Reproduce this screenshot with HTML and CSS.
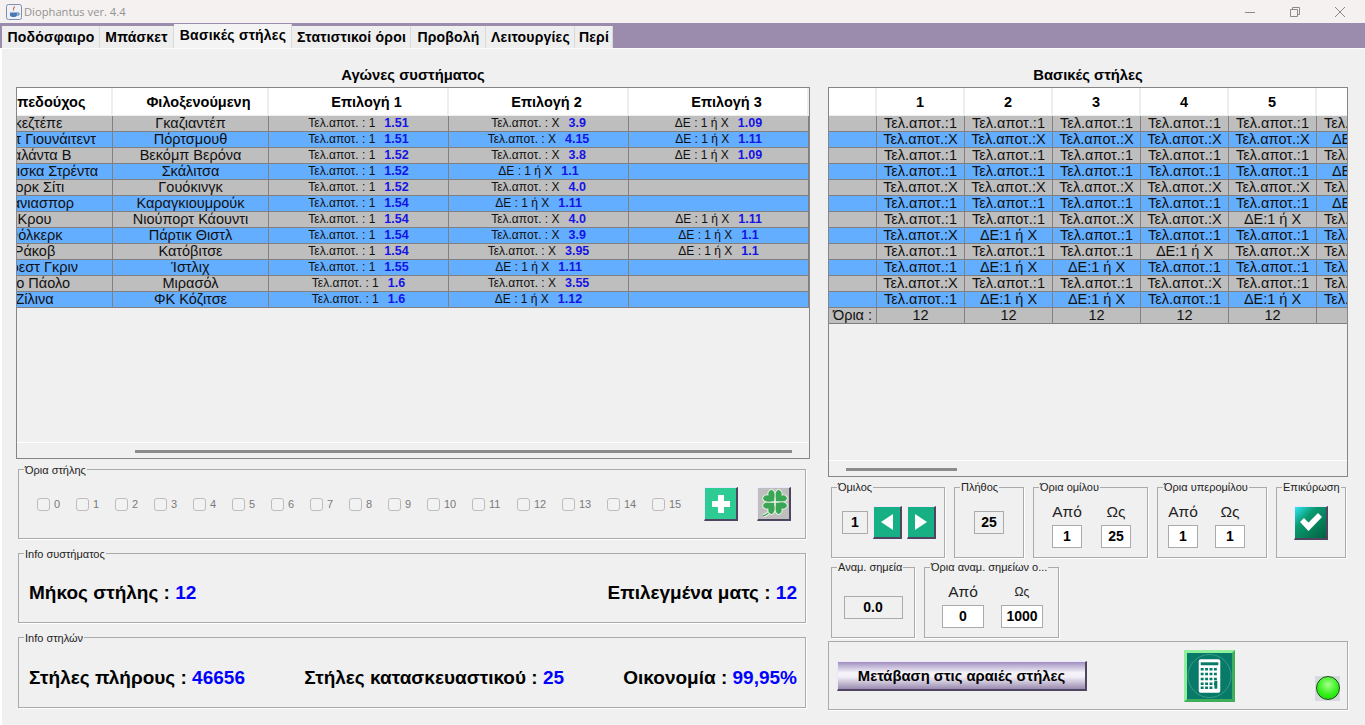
FILE: index.html
```html
<!DOCTYPE html>
<html lang="el">
  <head>
    <meta charset="UTF-8">
    <title>Diophantus ver. 4.4</title>
    <link rel="stylesheet" href="styles.css">
  </head>
  <body>
    <div class="titlebar">
      <svg class="app-icon" width="16" height="16" viewBox="0 0 16 16">
        <rect x="0.5" y="0.5" width="15" height="15" rx="2" fill="#eef1f6" stroke="#7d8fb0"/>
        <path d="M8.5 2 C10 4 6.5 5 8 7.5 C6 6 7 4 8.5 2Z" fill="#d9592b"/>
        <path d="M4 8.5 H11 V11 C11 12.5 9.5 13 7.5 13 C5.5 13 4 12.5 4 11Z" fill="#4a78b5"/>
        <path d="M11 9 H13 V11 H11" fill="none" stroke="#4a78b5"/>
      </svg>
      <span class="app-name">Diophantus ver. 4.4</span>
      <div class="win-controls">
        <svg width="12" height="12" viewBox="0 0 12 12"><path d="M1 6.5 H11" stroke="#8a8a8a"/></svg>
        <svg width="12" height="12" viewBox="0 0 12 12"><path d="M1.5 3.5 H8.5 V10.5 H1.5Z M3.5 3.5 V1.5 H10.5 V8.5 H8.5" fill="none" stroke="#8a8a8a"/></svg>
        <svg width="12" height="12" viewBox="0 0 12 12"><path d="M1 1 L11 11 M11 1 L1 11" stroke="#8a8a8a"/></svg>
      </div>
    </div>

    <div class="tabs">
      <div class="tab tab-1">Ποδόσφαιρο</div>
      <div class="tab tab-2">Μπάσκετ</div>
      <div class="tab tab-3 active">Βασικές στήλες</div>
      <div class="tab tab-4">Στατιστικοί όροι</div>
      <div class="tab tab-5">Προβολή</div>
      <div class="tab tab-6">Λειτουργίες</div>
      <div class="tab tab-7">Περί</div>
    </div>

    <div class="pane">
      <div class="col-left">
        <h2 class="heading">Αγώνες συστήματος</h2>
        <div class="table-box games-box">
          <div class="table-clip">
            <table class="games">
              <thead>
                <tr><th>Γηπεδούχος</th><th>Φιλοξενούμενη</th><th>Επιλογή 1</th><th>Επιλογή 2</th><th>Επιλογή 3</th></tr>
              </thead>
              <tbody>
                <tr><td>Γκεζτέπε</td><td>Γκαζιαντέπ</td><td class="opt">Τελ.αποτ. : 1<b>1.51</b></td><td class="opt">Τελ.αποτ. : Χ<b>3.9</b></td><td class="opt">ΔΕ : 1 ή Χ<b>1.09</b></td></tr>
                <tr><td>Σέφιλντ Γιουνάιτεντ</td><td>Πόρτσμουθ</td><td class="opt">Τελ.αποτ. : 1<b>1.51</b></td><td class="opt">Τελ.αποτ. : Χ<b>4.15</b></td><td class="opt">ΔΕ : 1 ή Χ<b>1.11</b></td></tr>
                <tr><td>Αταλάντα Β</td><td>Βεκόμπ Βερόνα</td><td class="opt">Τελ.αποτ. : 1<b>1.52</b></td><td class="opt">Τελ.αποτ. : Χ<b>3.8</b></td><td class="opt">ΔΕ : 1 ή Χ<b>1.09</b></td></tr>
                <tr><td>Μπράνισκα Στρέντα</td><td>Σκάλιτσα</td><td class="opt">Τελ.αποτ. : 1<b>1.52</b></td><td class="opt">ΔΕ : 1 ή Χ<b>1.1</b></td><td></td></tr>
                <tr><td>Γιορκ Σίτι</td><td>Γουόκινγκ</td><td class="opt">Τελ.αποτ. : 1<b>1.52</b></td><td class="opt">Τελ.αποτ. : Χ<b>4.0</b></td><td></td></tr>
                <tr><td>Αλάνιασπορ</td><td>Καραγκιουμρούκ</td><td class="opt">Τελ.αποτ. : 1<b>1.54</b></td><td class="opt">ΔΕ : 1 ή Χ<b>1.11</b></td><td></td></tr>
                <tr><td>Κρου</td><td>Νιούπορτ Κάουντι</td><td class="opt">Τελ.αποτ. : 1<b>1.54</b></td><td class="opt">Τελ.αποτ. : Χ<b>4.0</b></td><td class="opt">ΔΕ : 1 ή Χ<b>1.11</b></td></tr>
                <tr><td>Φόλκερκ</td><td>Πάρτικ Θιστλ</td><td class="opt">Τελ.αποτ. : 1<b>1.54</b></td><td class="opt">Τελ.αποτ. : Χ<b>3.9</b></td><td class="opt">ΔΕ : 1 ή Χ<b>1.1</b></td></tr>
                <tr><td>Ράκοβ</td><td>Κατόβιτσε</td><td class="opt">Τελ.αποτ. : 1<b>1.54</b></td><td class="opt">Τελ.αποτ. : Χ<b>3.95</b></td><td class="opt">ΔΕ : 1 ή Χ<b>1.1</b></td></tr>
                <tr><td>Φόρεστ Γκριν</td><td>Ίστλιχ</td><td class="opt">Τελ.αποτ. : 1<b>1.55</b></td><td class="opt">ΔΕ : 1 ή Χ<b>1.11</b></td><td></td></tr>
                <tr><td>Σάο Πάολο</td><td>Μιρασόλ</td><td class="opt">Τελ.αποτ. : 1<b>1.6</b></td><td class="opt">Τελ.αποτ. : Χ<b>3.55</b></td><td></td></tr>
                <tr><td>Ζίλινα</td><td>ΦΚ Κόζιτσε</td><td class="opt">Τελ.αποτ. : 1<b>1.6</b></td><td class="opt">ΔΕ : 1 ή Χ<b>1.12</b></td><td></td></tr>
              </tbody>
            </table>
          </div>
          <div class="hscroll"><div class="thumb games-thumb"></div></div>
        </div>

        <div class="group limits">
          <span class="group-title">Όρια στήλης</span>
          <div class="checks">
            <label class="check"><i></i>0</label>
            <label class="check"><i></i>1</label>
            <label class="check"><i></i>2</label>
            <label class="check"><i></i>3</label>
            <label class="check"><i></i>4</label>
            <label class="check"><i></i>5</label>
            <label class="check"><i></i>6</label>
            <label class="check"><i></i>7</label>
            <label class="check"><i></i>8</label>
            <label class="check"><i></i>9</label>
            <label class="check wide"><i></i>10</label>
            <label class="check wide"><i></i>11</label>
            <label class="check wide"><i></i>12</label>
            <label class="check wide"><i></i>13</label>
            <label class="check wide"><i></i>14</label>
            <label class="check wide"><i></i>15</label>
          </div>
          <button class="bevel plus-btn">
            <svg width="20" height="20" viewBox="0 0 20 20"><path d="M7 1 H13 V7 H19 V13 H13 V19 H7 V13 H1 V7 H7Z" fill="#fff"/></svg>
          </button>
          <button class="bevel clover-btn">
            <svg width="30" height="30" viewBox="0 0 30 30">
              <defs>
                <path id="leaf" d="M0 0 C-1 -3 -7 -4 -7 -9 C-7 -13 -2 -13 0 -10 C2 -13 7 -13 7 -9 C7 -4 1 -3 0 0Z"/>
              </defs>
              <path d="M15 15 C13 21 10 25 4 27" fill="none" stroke="#fff" stroke-width="3"/>
              <path d="M15 15 C13 21 10 25 4 27" fill="none" stroke="#3a9f52" stroke-width="1.5"/>
              <g fill="#3aa655" stroke="#e4efe2" stroke-width="1">
                <use href="#leaf" transform="translate(16 13) rotate(45)"/>
                <use href="#leaf" transform="translate(16 13) rotate(135)"/>
                <use href="#leaf" transform="translate(16 13) rotate(225)"/>
                <use href="#leaf" transform="translate(16 13) rotate(315)"/>
              </g>
            </svg>
          </button>
        </div>

        <div class="group info">
          <span class="group-title">Info συστήματος</span>
          <div class="stat">Μήκος στήλης : <em>12</em></div>
          <div class="stat">Επιλεγμένα ματς : <em>12</em></div>
        </div>

        <div class="group info condensed">
          <span class="group-title">Info στηλών</span>
          <div class="stat">Στήλες πλήρους : <em>46656</em></div>
          <div class="stat">Στήλες κατασκευαστικού : <em>25</em></div>
          <div class="stat">Οικονομία : <em>99,95%</em></div>
        </div>
      </div>

      <div class="col-right">
        <h2 class="heading">Βασικές στήλες</h2>
        <div class="table-box columns-box">
          <div class="table-clip">
            <table class="columns">
              <thead>
                <tr><th></th><th>1</th><th>2</th><th>3</th><th>4</th><th>5</th><th></th></tr>
              </thead>
              <tbody>
                <tr><td></td><td>Τελ.αποτ.:1</td><td>Τελ.αποτ.:1</td><td>Τελ.αποτ.:1</td><td>Τελ.αποτ.:1</td><td>Τελ.αποτ.:1</td><td>Τελ.αποτ.:1</td></tr>
                <tr><td></td><td>Τελ.αποτ.:Χ</td><td>Τελ.αποτ.:Χ</td><td>Τελ.αποτ.:Χ</td><td>Τελ.αποτ.:Χ</td><td>Τελ.αποτ.:Χ</td><td>ΔΕ:1 ή Χ</td></tr>
                <tr><td></td><td>Τελ.αποτ.:1</td><td>Τελ.αποτ.:1</td><td>Τελ.αποτ.:1</td><td>Τελ.αποτ.:1</td><td>Τελ.αποτ.:1</td><td>Τελ.αποτ.:1</td></tr>
                <tr><td></td><td>Τελ.αποτ.:1</td><td>Τελ.αποτ.:1</td><td>Τελ.αποτ.:1</td><td>Τελ.αποτ.:1</td><td>Τελ.αποτ.:1</td><td>ΔΕ:1 ή Χ</td></tr>
                <tr><td></td><td>Τελ.αποτ.:Χ</td><td>Τελ.αποτ.:Χ</td><td>Τελ.αποτ.:Χ</td><td>Τελ.αποτ.:Χ</td><td>Τελ.αποτ.:Χ</td><td>Τελ.αποτ.:1</td></tr>
                <tr><td></td><td>Τελ.αποτ.:1</td><td>Τελ.αποτ.:1</td><td>Τελ.αποτ.:1</td><td>Τελ.αποτ.:1</td><td>Τελ.αποτ.:1</td><td>ΔΕ:1 ή Χ</td></tr>
                <tr><td></td><td>Τελ.αποτ.:1</td><td>Τελ.αποτ.:1</td><td>Τελ.αποτ.:Χ</td><td>Τελ.αποτ.:Χ</td><td>ΔΕ:1 ή Χ</td><td>Τελ.αποτ.:1</td></tr>
                <tr><td></td><td>Τελ.αποτ.:Χ</td><td>ΔΕ:1 ή Χ</td><td>Τελ.αποτ.:1</td><td>Τελ.αποτ.:1</td><td>Τελ.αποτ.:1</td><td>Τελ.αποτ.:1</td></tr>
                <tr><td></td><td>Τελ.αποτ.:1</td><td>Τελ.αποτ.:1</td><td>Τελ.αποτ.:1</td><td>ΔΕ:1 ή Χ</td><td>Τελ.αποτ.:Χ</td><td>Τελ.αποτ.:1</td></tr>
                <tr><td></td><td>Τελ.αποτ.:1</td><td>ΔΕ:1 ή Χ</td><td>ΔΕ:1 ή Χ</td><td>Τελ.αποτ.:1</td><td>Τελ.αποτ.:1</td><td>Τελ.αποτ.:1</td></tr>
                <tr><td></td><td>Τελ.αποτ.:Χ</td><td>Τελ.αποτ.:1</td><td>Τελ.αποτ.:1</td><td>Τελ.αποτ.:Χ</td><td>Τελ.αποτ.:1</td><td>Τελ.αποτ.:1</td></tr>
                <tr><td></td><td>Τελ.αποτ.:1</td><td>ΔΕ:1 ή Χ</td><td>ΔΕ:1 ή Χ</td><td>Τελ.αποτ.:1</td><td>ΔΕ:1 ή Χ</td><td>Τελ.αποτ.:1</td></tr>
                <tr class="totals"><td>Όρια :</td><td>12</td><td>12</td><td>12</td><td>12</td><td>12</td><td></td></tr>
              </tbody>
            </table>
          </div>
          <div class="hscroll"><div class="thumb columns-thumb"></div></div>
        </div>

        <div class="group-row row-one">
          <div class="group g-omilos">
            <span class="group-title">Όμιλος</span>
            <div class="value">1</div>
            <button class="bevel arrow-btn">
              <svg width="18" height="20" viewBox="0 0 18 20"><path d="M15 2 V18 L3 10Z" fill="#fff"/></svg>
            </button>
            <button class="bevel arrow-btn">
              <svg width="18" height="20" viewBox="0 0 18 20"><path d="M3 2 V18 L15 10Z" fill="#fff"/></svg>
            </button>
          </div>
          <div class="group g-count">
            <span class="group-title">Πλήθος</span>
            <div class="value">25</div>
          </div>
          <div class="group g-range g-group-range">
            <span class="group-title">Όρια ομίλου</span>
            <div class="field"><span>Από</span><div class="input">1</div></div>
            <div class="field"><span>Ως</span><div class="input">25</div></div>
          </div>
          <div class="group g-range g-super">
            <span class="group-title">Όρια υπερομίλου</span>
            <div class="field"><span>Από</span><div class="input">1</div></div>
            <div class="field"><span>Ως</span><div class="input">1</div></div>
          </div>
          <div class="group g-confirm">
            <span class="group-title">Επικύρωση</span>
            <button class="bevel confirm-btn">
              <svg width="26" height="22" viewBox="0 0 26 22"><path d="M2 11 L6 7 L10.5 11.5 L20 2 L24 6 L10.5 20Z" fill="#fff"/></svg>
            </button>
          </div>
        </div>

        <div class="group-row row-two">
          <div class="group g-points">
            <span class="group-title">Αναμ. σημεία</span>
            <div class="value">0.0</div>
          </div>
          <div class="group g-range g-points-range">
            <span class="group-title">Όρια αναμ. σημείων ο...</span>
            <div class="field"><span>Από</span><div class="input">0</div></div>
            <div class="field small"><span>Ως</span><div class="input">1000</div></div>
          </div>
        </div>

        <div class="group actions">
          <button class="bevel sparse-btn">Μετάβαση στις αραιές στήλες</button>
          <button class="calc-btn">
            <svg width="46" height="46" viewBox="0 0 46 46">
              <circle cx="23" cy="23" r="22" fill="none" stroke="#3b9a86"/>
              <rect x="12" y="6" width="22" height="34" rx="2" fill="#fff"/>
              <rect x="14" y="9" width="18" height="3" fill="#087b68"/>
              <path d="M14 16 H32 M14 21 H32 M14 26 H32 M14 31 H32" stroke="#087b68" stroke-width="2.5" stroke-dasharray="3 1.5"/>
              <path d="M29.5 28 V36" stroke="#087b68" stroke-width="3"/>
              <path d="M14 35 H26" stroke="#087b68" stroke-width="2.5" stroke-dasharray="3 1.5"/>
            </svg>
          </button>
          <div class="led"><i></i></div>
        </div>
      </div>
    </div>
  </body>
</html>
```
FILE: styles.css
```css
* {
  box-sizing: border-box;
}

body {
  font-family: "Liberation Sans", Arial, sans-serif;
  background: #f0f0f0;
  color: #000;
  margin: 0;
  width: 1365px;
  height: 725px;
  overflow: hidden;
}

button {
  padding: 0;
  font-family: inherit;
  cursor: pointer;
}

/* window chrome */

.titlebar {
  height: 23px;
  background: #f5f1f1;
  display: flex;
  align-items: center;
  padding-left: 6px;
}

.app-name {
  font-family: "Open Sans", sans-serif;
  font-size: 11.2px;
  color: #929292;
  margin-left: 2px;
}

.win-controls {
  margin-left: auto;
  display: flex;
  gap: 33px;
  padding-right: 19px;
}

.tabs {
  height: 25px;
  background: #9b8cad;
  display: flex;
  align-items: flex-end;
  padding-left: 2px;
  font-size: 14px;
  font-weight: bold;
}

.tab {
  height: 22px;
  background: #eeeeee;
  border-right: 1px solid #d9d9d9;
  display: flex;
  align-items: center;
  justify-content: center;
  letter-spacing: 0.2px;
}

.tab.active {
  height: 24px;
  background: #f4f4f4;
  padding-bottom: 3px;
}

.tab-1 { width: 98px; padding-left: 1px; }
.tab-2 { width: 74px; }
.tab-3 { width: 118px; padding-left: 1px; }
.tab-4 { width: 119px; padding-left: 1px; }
.tab-5 { width: 75px; padding-left: 1px; }
.tab-6 { width: 89px; padding-left: 1px; }
.tab-7 { width: 38px; padding-left: 1px; }

.pane {
  height: 677px;
  display: flex;
  gap: 18px;
  border-left: 2px solid #fff;
  padding-left: 14px;
  border-top: 1px solid #fbfbfb;
}

.col-left {
  width: 794px;
}

.col-right {
  width: 520px;
}

.heading {
  margin: 0;
  height: 38px;
  padding-top: 18px;
  font-size: 14.8px;
  line-height: 17px;
  font-weight: bold;
  text-align: center;
}

/* tables */

.table-box {
  border: 1px solid #868686;
  display: flex;
  flex-direction: column;
}

.games-box {
  height: 372px;
}

.columns-box {
  height: 390px;
}

.table-clip {
  flex: 1;
  overflow: hidden;
}

table {
  border-collapse: separate;
  border-spacing: 0;
  table-layout: fixed;
}

th {
  height: 28px;
  background: #fff;
  border-right: 2px solid #eeeeee;
  border-bottom: 1px solid #eeeeee;
  font-size: 14.5px;
  font-weight: bold;
  padding: 0;
}

td {
  height: 16px;
  padding: 0;
  font-size: 14.5px;
  line-height: 15px;
  color: #111;
  text-align: center;
  white-space: nowrap;
  overflow: hidden;
  border-right: 1px solid #808080;
  border-bottom: 1px solid #808080;
}

tbody tr:nth-child(odd) td {
  background: #bebebe;
}

tbody tr:nth-child(even) td {
  background: #64aeff;
}

.games {
  width: 852px;
  margin-left: -60px;
}

.games th {
  padding-left: 17px;
}

.games th:nth-child(1),
.games th:nth-child(2) {
  width: 156px;
}

td.opt {
  font-size: 12px;
}

.opt b {
  color: #1414e6;
  font-size: 12.5px;
  margin-left: 9px;
}

.columns {
  width: 576px;
}

.columns th,
.columns td {
  width: 88px;
}

.columns th:first-child,
.columns td:first-child {
  width: 48px;
}

.columns tbody tr.totals td {
  background: #bebebe;
}

.hscroll {
  height: 16px;
  border-top: 1px solid #fff;
  padding-top: 7px;
}

.thumb {
  height: 3px;
  background: #8c8c8c;
}

.games-thumb {
  width: 657px;
  margin-left: 118px;
}

.columns-thumb {
  width: 111px;
  margin-left: 17px;
}

/* titled boxes */

.group {
  position: relative;
  border: 1px solid #ababab;
  box-shadow: 1px 1px 0 #fff;
}

.group-title {
  position: absolute;
  top: -7px;
  left: 5px;
  padding: 0 1px;
  background: #f0f0f0;
  font-size: 11px;
  line-height: 13px;
  color: #222;
  white-space: nowrap;
}

.col-left .group-title {
  top: -6px;
}

.limits {
  width: 788px;
  height: 70px;
  margin: 10px 0 14px 2px;
  display: flex;
  align-items: center;
  padding-left: 18px;
}

.checks {
  display: flex;
  width: 667px;
}

.check {
  width: 39px;
  display: flex;
  align-items: center;
  gap: 4px;
  font-size: 11px;
  color: #7a7a7a;
}

.check.wide {
  width: 45px;
}

.check i {
  width: 13px;
  height: 13px;
  border: 1px solid #bdbdbd;
  border-radius: 3px;
  background: #f2f2f2;
}

.bevel {
  border-style: solid;
  border-width: 1px 2px 2px 1px;
  border-color: #eee6fb #4f4560 #4f4560 #eee6fb;
  display: flex;
  align-items: center;
  justify-content: center;
}

.plus-btn {
  width: 34px;
  height: 34px;
  background: #2fcb94;
}

.clover-btn {
  width: 34px;
  height: 34px;
  margin-left: 19px;
  background: #bebebe;
}

.info {
  width: 788px;
  height: 70px;
  margin: 0 0 14px 2px;
  display: flex;
  align-items: center;
  justify-content: space-between;
  padding: 10px 8px 0 10px;
}

.stat {
  font-size: 19px;
  font-weight: bold;
}

.stat em {
  font-style: normal;
  color: #0000ff;
}

.condensed {
  height: 71px;
  margin-bottom: 0;
}

.group-row {
  display: flex;
  margin-left: 3px;
  gap: 9px;
}

.row-one {
  margin-top: 10px;
}

.row-two {
  margin-top: 9px;
}

.group-row .group {
  height: 71px;
  display: flex;
}

.value {
  height: 23px;
  border: 1px solid #ababab;
  font-size: 14px;
  line-height: 21px;
  font-weight: bold;
  text-align: center;
}

.g-omilos {
  width: 114px;
  padding-left: 10px;
  align-items: center;
  gap: 5px;
}

.g-omilos .value {
  width: 26px;
}

.arrow-btn {
  width: 29px;
  height: 33px;
  background: #17b085;
}

.g-count {
  width: 70px;
  align-items: center;
  justify-content: center;
}

.g-count .value {
  width: 30px;
}

.g-range {
  align-items: flex-end;
  padding-bottom: 9px;
}

.g-group-range {
  width: 115px;
  padding-left: 18px;
  gap: 19px;
}

.g-super {
  width: 110px;
  padding-left: 10px;
  gap: 17px;
}

.g-points-range {
  width: 135px;
  padding-left: 17px;
  gap: 17px;
}

.field {
  display: flex;
  flex-direction: column;
  align-items: center;
  gap: 3px;
}

.field span {
  font-size: 15.5px;
  line-height: 20px;
  color: #222;
}

.field.small span {
  font-size: 12px;
}

.input {
  width: 30px;
  height: 23px;
  background: #fff;
  border: 1px solid #ababab;
  font-size: 14px;
  line-height: 21px;
  font-weight: bold;
  text-align: center;
}

.g-points-range .input {
  width: 42px;
}

.g-confirm {
  width: 70px;
  align-items: center;
  justify-content: center;
}

.confirm-btn {
  width: 34px;
  height: 34px;
  background: linear-gradient(135deg, #2de8f5 0%, #0a9a70 35%, #04603f 100%);
}

.g-points {
  width: 84px;
  align-items: center;
  justify-content: center;
  padding-top: 10px;
}

.g-points .value {
  width: 59px;
}

.actions {
  width: 520px;
  height: 69px;
  margin-top: 3px;
  display: flex;
  align-items: center;
  padding-left: 8px;
}

.sparse-btn {
  width: 250px;
  height: 30px;
  margin-top: 1px;
  font-size: 14.8px;
  font-weight: bold;
  background: linear-gradient(180deg, #a08fc0 0%, #f6f4fa 40%, #f2eff7 55%, #9a8bb0 100%);
}

.calc-btn {
  width: 51px;
  height: 52px;
  margin-left: 97px;
  background: #087b68;
  border-style: solid;
  border-width: 3px;
  border-color: #8df09c #3fae5a #3fae5a #8df09c;
  display: flex;
  align-items: center;
  justify-content: center;
}

.led {
  width: 25px;
  height: 25px;
  margin: 25px 0 0 80px;
  background: #d6dae0;
  display: flex;
  align-items: center;
  justify-content: center;
}

.led i {
  width: 24px;
  height: 24px;
  border-radius: 50%;
  border: 1px solid #1a4a1a;
  background: radial-gradient(circle at 50% 35%, #a5ff8c 0%, #35f01a 55%, #10d800 100%);
}
```
